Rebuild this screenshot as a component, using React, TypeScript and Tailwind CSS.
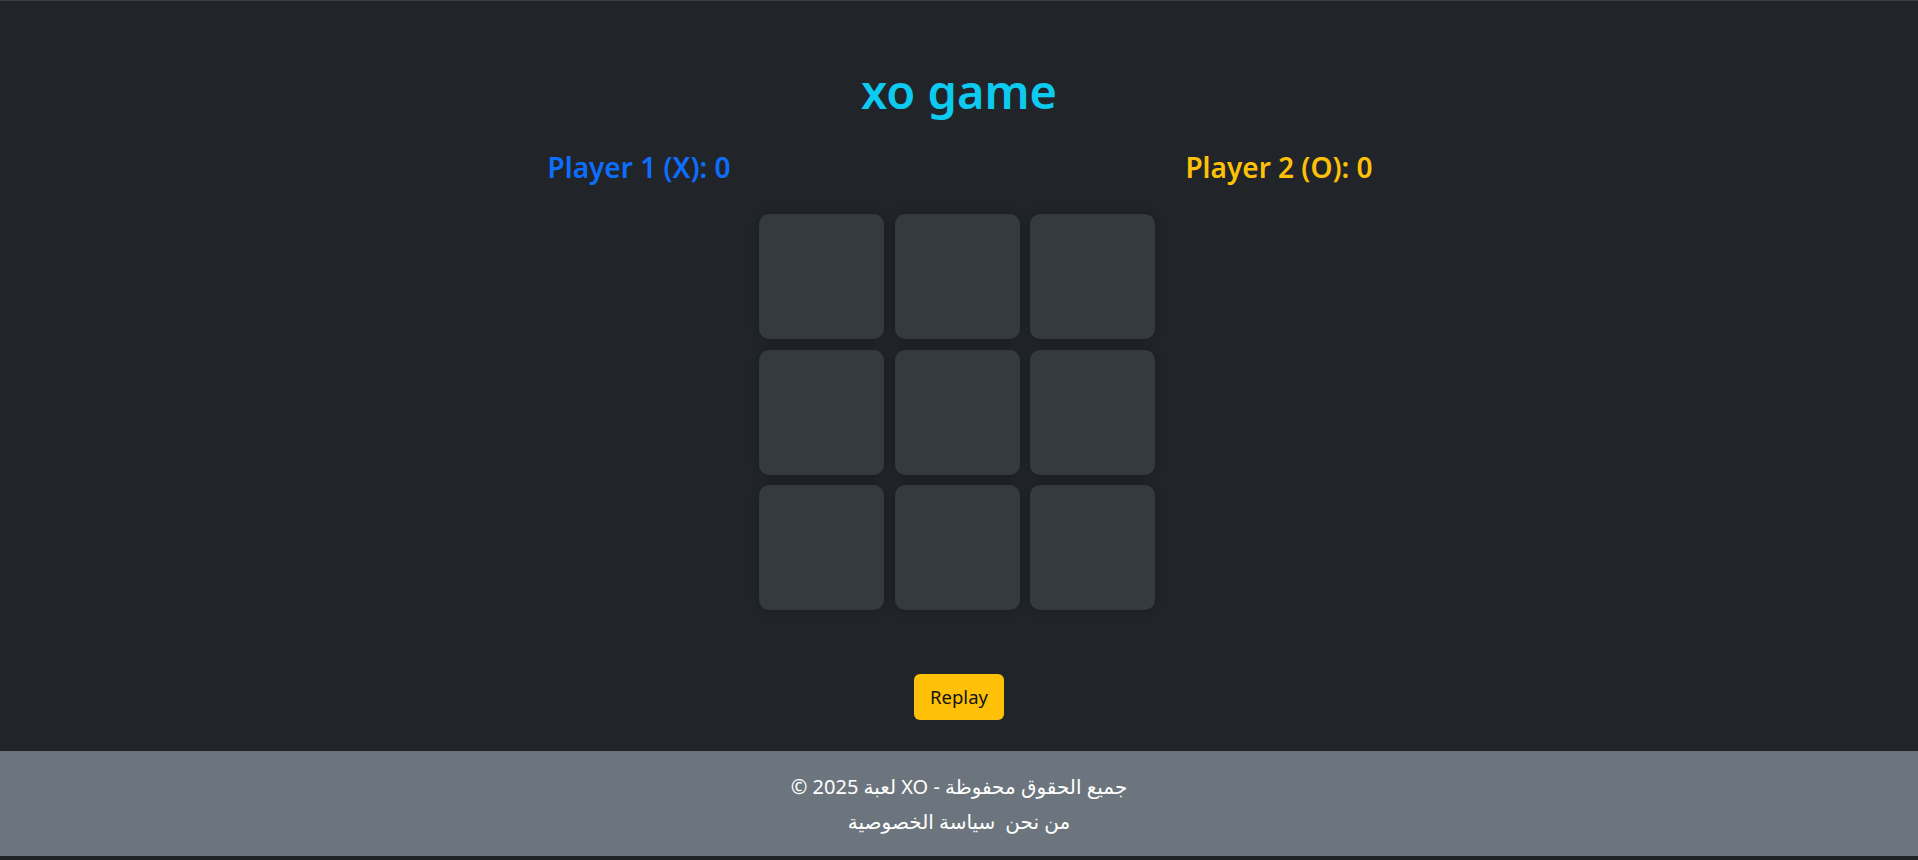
import React, { useState } from "react";

type Mark = "X" | "O" | null;

const FONT = "font-['Noto_Sans','DejaVu_Sans',sans-serif]";

export default function App() {
  const [cells, setCells] = useState<Mark[]>(Array(9).fill(null));
  const [turn, setTurn] = useState<"X" | "O">("X");
  const [scores] = useState({ x: 0, o: 0 });

  const play = (i: number) => {
    if (cells[i]) return;
    const next = cells.slice();
    next[i] = turn;
    setCells(next);
    setTurn(turn === "X" ? "O" : "X");
  };

  const replay = () => {
    setCells(Array(9).fill(null));
    setTurn("X");
  };

  return (
    <div className={`h-[860px] bg-[#212529] border-t border-[#3b3f43] flex flex-col ${FONT}`}>
      <main className="flex-1 flex flex-col items-center">
        <h1 className="mt-[61px] h-[58px] leading-[58px] text-[47px] font-semibold text-[#0dcaf0]">
          xo game
        </h1>

        <div className="mt-[30px] grid grid-cols-2 w-[1280px] h-[34px] leading-[34px] text-[28px] font-semibold">
          <div className="text-center text-[#0d6efd]">Player 1 (X): {scores.x}</div>
          <div className="text-center text-[#ffc107]">Player 2 (O): {scores.o}</div>
        </div>

        <div className="mt-[30px] mr-[4px] grid grid-cols-[125px_125px_125px] gap-[10.5px]">
          {cells.map((c, i) => (
            <button
              key={i}
              onClick={() => play(i)}
              className={`w-[125px] h-[125px] rounded-[10px] bg-[#343a40] shadow-[0_0_10px_rgba(0,0,0,0.25)] text-[64px] font-bold ${
                c === "X" ? "text-[#0d6efd]" : "text-[#ffc107]"
              }`}
            >
              {c}
            </button>
          ))}
        </div>

        <button
          onClick={replay}
          className="mt-[64px] w-[90px] h-[46px] rounded-[6px] bg-[#ffc107] text-[#111] text-[18.5px] leading-none"
        >
          Replay
        </button>
      </main>

      <footer dir="rtl" className="h-[105px] bg-[#6c757d] text-white text-[20px] flex flex-col items-center pt-[24px] gap-[11px]">
        <p className="leading-[24px]">جميع الحقوق محفوظة - XO لعبة 2025 ©</p>
        <p className="leading-[24px] flex gap-[10px]">
          <a href="#" className="text-white">من نحن</a>
          <a href="#" className="text-white">سياسة الخصوصية</a>
        </p>
      </footer>
      <div className="h-[4px] bg-[#1f2326]" />
    </div>
  );
}
